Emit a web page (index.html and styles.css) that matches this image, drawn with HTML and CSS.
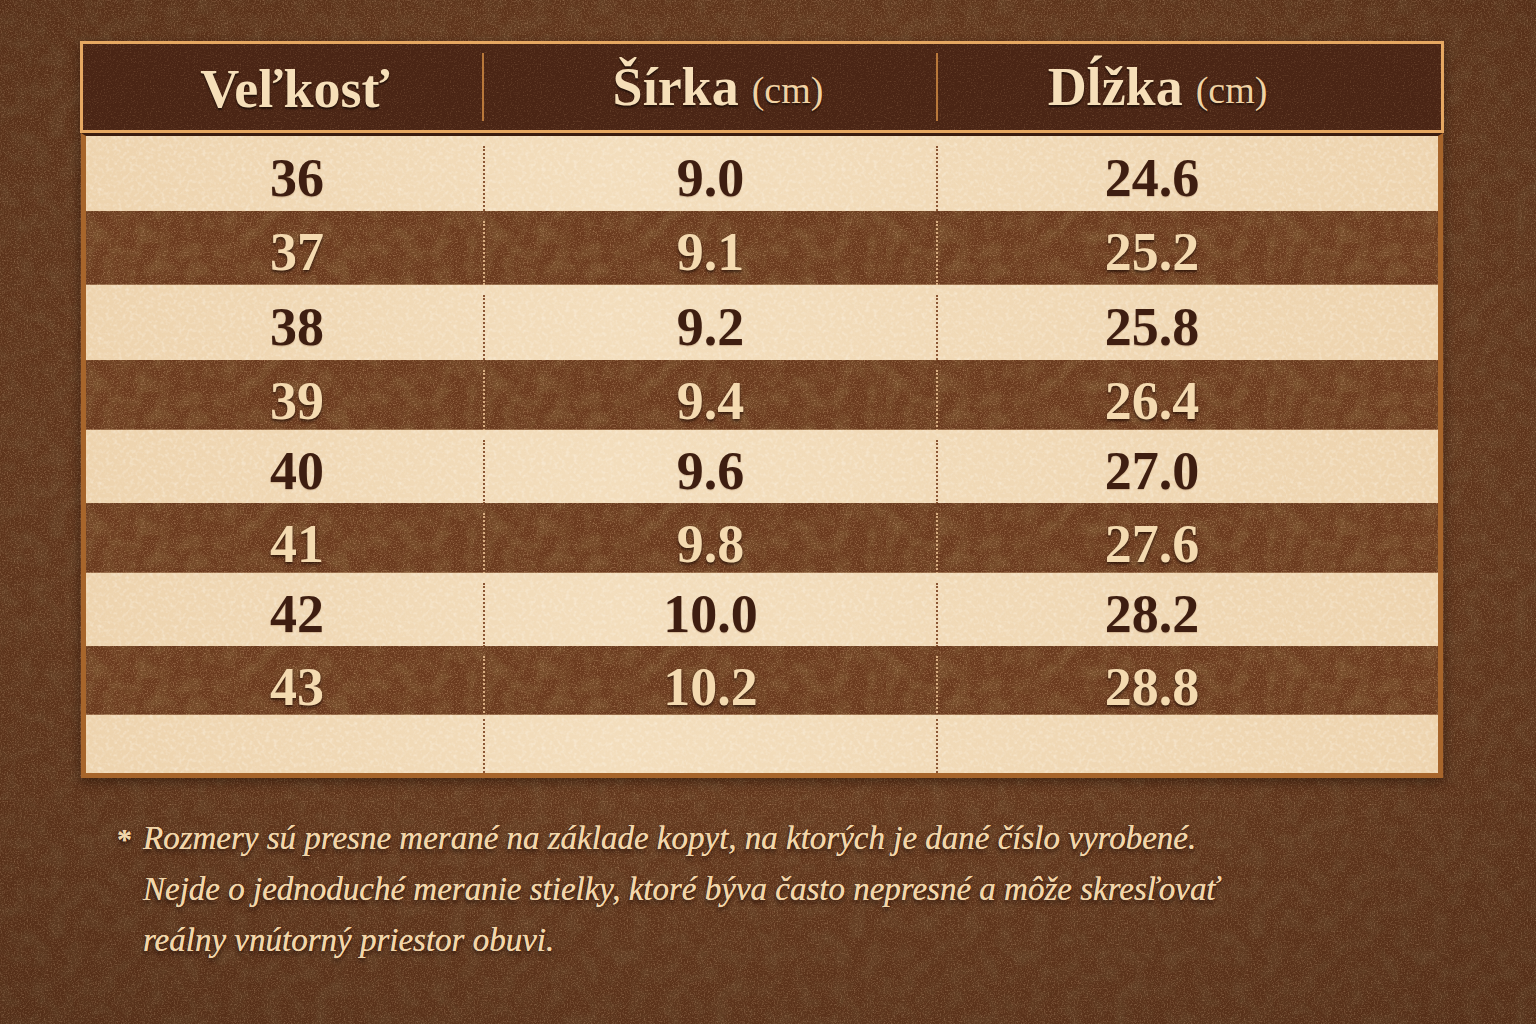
FILE: index.html
```html
<!DOCTYPE html>
<html lang="sk">
<head>
<meta charset="utf-8">
<title>Veľkostná tabuľka</title>
<link rel="stylesheet" href="styles.css">
</head>
<body>
<main class="page">
  <section class="chart">
    <div class="head">
      <div class="hcell c1">Veľkosť</div>
      <div class="hcell c2">Šírka <span class="unit">(cm)</span></div>
      <div class="hcell c3">Dĺžka <span class="unit">(cm)</span></div>
    </div>
    <div class="body">
      <div class="row light"><div class="cell c1">36</div><div class="cell c2">9.0</div><div class="cell c3">24.6</div></div>
      <div class="row dark"><div class="cell c1">37</div><div class="cell c2">9.1</div><div class="cell c3">25.2</div></div>
      <div class="row light"><div class="cell c1">38</div><div class="cell c2">9.2</div><div class="cell c3">25.8</div></div>
      <div class="row dark"><div class="cell c1">39</div><div class="cell c2">9.4</div><div class="cell c3">26.4</div></div>
      <div class="row light"><div class="cell c1">40</div><div class="cell c2">9.6</div><div class="cell c3">27.0</div></div>
      <div class="row dark"><div class="cell c1">41</div><div class="cell c2">9.8</div><div class="cell c3">27.6</div></div>
      <div class="row light"><div class="cell c1">42</div><div class="cell c2">10.0</div><div class="cell c3">28.2</div></div>
      <div class="row dark"><div class="cell c1">43</div><div class="cell c2">10.2</div><div class="cell c3">28.8</div></div>
      <div class="row light empty"><div class="cell c1"></div><div class="cell c2"></div><div class="cell c3"></div></div>
    </div>
  </section>
  <p class="note">
    <span class="star">*</span>
    <span class="note-text">Rozmery sú presne merané na základe kopyt, na ktorých je dané číslo vyrobené.<br>Nejde o jednoduché meranie stielky, ktoré býva často nepresné a môže skresľovať<br>reálny vnútorný priestor obuvi.</span>
  </p>
</main>
</body>
</html>
```
FILE: styles.css
```css
html, body {
  margin: 0;
  padding: 0;
}

body {
  width: 1536px;
  height: 1024px;
  overflow: hidden;
  background-color: #6b3c20;
  background-image:
    radial-gradient(ellipse 80% 75% at 50% 45%, rgba(150, 88, 45, 0.10), rgba(25, 10, 3, 0.30) 100%),
    url("data:image/svg+xml,%3Csvg xmlns='http://www.w3.org/2000/svg' width='300' height='300'%3E%3Cfilter id='g'%3E%3CfeTurbulence type='fractalNoise' baseFrequency='0.7' numOctaves='3' seed='4' stitchTiles='stitch'/%3E%3CfeColorMatrix values='0 0 0 0 0.72 0 0 0 0 0.44 0 0 0 0 0.25 1.2 0 0 0 -0.55'/%3E%3C/filter%3E%3Crect width='100%25' height='100%25' filter='url(%23g)'/%3E%3C/svg%3E"),
    url("data:image/svg+xml,%3Csvg xmlns='http://www.w3.org/2000/svg' width='400' height='400'%3E%3Cfilter id='d'%3E%3CfeTurbulence type='fractalNoise' baseFrequency='0.06' numOctaves='4' seed='9' stitchTiles='stitch'/%3E%3CfeColorMatrix values='0 0 0 0 0.18 0 0 0 0 0.08 0 0 0 0 0.03 1.8 0 0 0 -0.7'/%3E%3C/filter%3E%3Crect width='100%25' height='100%25' filter='url(%23d)'/%3E%3C/svg%3E");
  font-family: "Liberation Serif", "Times New Roman", serif;
}

.page {
  padding: 41px 0 0 80px;
}

.chart {
  width: 1364px;
  box-shadow: 0 4px 10px rgba(20, 8, 2, 0.45);
}

/* header */
.head {
  display: grid;
  grid-template-columns: 400px 453px 505px;
  height: 86px;
  border: 3px solid #e6a862;
  background-color: #4a2515;
  background-image:
    url("data:image/svg+xml,%3Csvg xmlns='http://www.w3.org/2000/svg' width='300' height='300'%3E%3Cfilter id='g'%3E%3CfeTurbulence type='fractalNoise' baseFrequency='0.7' numOctaves='3' seed='2' stitchTiles='stitch'/%3E%3CfeColorMatrix values='0 0 0 0 0.45 0 0 0 0 0.25 0 0 0 0 0.13 0.8 0 0 0 -0.42'/%3E%3C/filter%3E%3Crect width='100%25' height='100%25' filter='url(%23g)'/%3E%3C/svg%3E");
  color: #f6dfb9;
  font-weight: bold;
  font-size: 54px;
  text-shadow: 0 2px 2px rgba(0, 0, 0, 0.55);
}

.hcell {
  display: flex;
  align-items: center;
  justify-content: center;
  padding-top: 4px;
}

.hcell.c1 { padding-left: 24px; }
.hcell.c2 {
  padding-left: 16px;
  border-left: 2px solid #b9783a;
  margin: 9px 0 9px -1px;
  padding-top: 0;
}
.hcell.c3 {
  padding-right: 64px;
  border-left: 2px solid #b9783a;
  margin: 9px 0 9px 0;
  padding-top: 0;
}

.unit {
  font-weight: normal;
  font-size: 38px;
  margin-left: 13px;
  margin-top: 6px;
  color: #f0d2a4;
}

/* body */
.body {
  margin: 0 1px;
  border: 5px solid #a7652b;
  border-top: 3px solid #3a1c0f;
  display: grid;
  grid-template-rows: 75px 74px 75px 70px 73px 70px 73px 69px 58px;
}

.row {
  display: grid;
  grid-template-columns: 397px 453px 502px;
  font-weight: bold;
  font-size: 54px;
}

.row.light {
  background-color: #f0d9b6;
  background-image:
    url("data:image/svg+xml,%3Csvg xmlns='http://www.w3.org/2000/svg' width='300' height='300'%3E%3Cfilter id='p'%3E%3CfeTurbulence type='fractalNoise' baseFrequency='0.25' numOctaves='3' seed='7' stitchTiles='stitch'/%3E%3CfeColorMatrix values='0 0 0 0 1 0 0 0 0 0.95 0 0 0 0 0.85 1.0 0 0 0 -0.45'/%3E%3C/filter%3E%3Crect width='100%25' height='100%25' filter='url(%23p)'/%3E%3C/svg%3E"),
    linear-gradient(90deg, rgba(230, 195, 150, 0.25), rgba(255, 240, 215, 0.2) 40%, rgba(230, 195, 150, 0.25));
  color: #3e1e11;
  text-shadow: 0 1px 1px rgba(120, 70, 30, 0.25);
}

.row.dark {
  background-color: #6a3a1e;
  background-image:
    url("data:image/svg+xml,%3Csvg xmlns='http://www.w3.org/2000/svg' width='300' height='300'%3E%3Cfilter id='g'%3E%3CfeTurbulence type='fractalNoise' baseFrequency='0.7' numOctaves='3' seed='5' stitchTiles='stitch'/%3E%3CfeColorMatrix values='0 0 0 0 0.7 0 0 0 0 0.42 0 0 0 0 0.24 1.1 0 0 0 -0.52'/%3E%3C/filter%3E%3Crect width='100%25' height='100%25' filter='url(%23g)'/%3E%3C/svg%3E"),
    url("data:image/svg+xml,%3Csvg xmlns='http://www.w3.org/2000/svg' width='400' height='400'%3E%3Cfilter id='d'%3E%3CfeTurbulence type='fractalNoise' baseFrequency='0.06' numOctaves='4' seed='3' stitchTiles='stitch'/%3E%3CfeColorMatrix values='0 0 0 0 0.2 0 0 0 0 0.09 0 0 0 0 0.03 1.8 0 0 0 -0.7'/%3E%3C/filter%3E%3Crect width='100%25' height='100%25' filter='url(%23d)'/%3E%3C/svg%3E");
  color: #f4dab0;
  text-shadow: 0 2px 3px rgba(20, 6, 0, 0.65);
  border-bottom: 1px solid rgba(250, 215, 170, 0.3);
}

.cell {
  display: flex;
  align-items: center;
  justify-content: center;
  margin-top: 10px;
  padding-bottom: 2px;
}

.cell.c1 { padding-left: 25px; }
.cell.c2 { border-left: 2px dotted #8b5634; }
.cell.c3 { border-left: 2px dotted #8b5634; padding-right: 72px; }

.row.dark .cell.c2,
.row.dark .cell.c3 {
  border-left-color: #d9ae82;
}

.row.empty .cell { margin-top: 4px; }

/* footnote */
.note {
  display: flex;
  margin: 35px 0 0 37px;
  color: #f2d6aa;
  font-style: italic;
  font-size: 33px;
  line-height: 51px;
  text-shadow: 0 0 0.6px #f2d6aa, 0 3px 4px rgba(20, 6, 0, 0.7);
}

.star {
  width: 26px;
  font-style: normal;
  font-weight: bold;
  font-size: 30px;
}
```
